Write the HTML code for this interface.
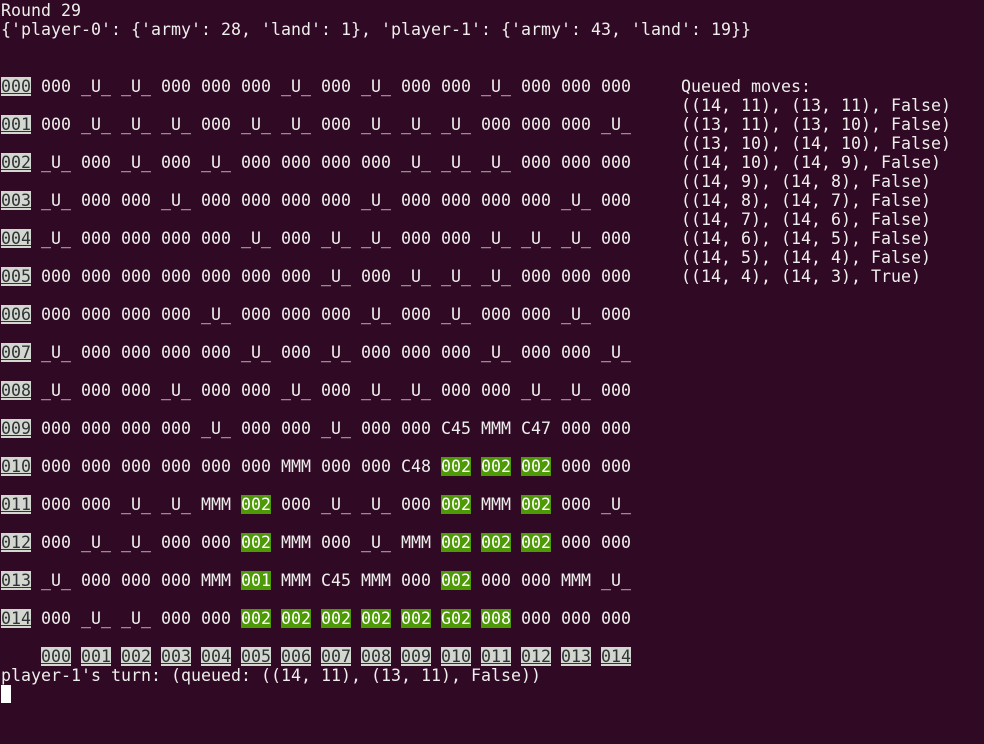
<!DOCTYPE html>
<html><head><meta charset="utf-8"><style>
html,body{margin:0;padding:0;background:#300a24;width:984px;height:744px;overflow:hidden}
pre{position:absolute;margin:0;font-family:"DejaVu Sans Mono","Liberation Mono",monospace;font-size:16.61px;line-height:19px;color:#eeeeec;white-space:pre}
.l{background:#d3d7cf;color:#2e3436;text-decoration:underline}
.g{background:#4e9a06;color:#ffffff}
.cur{position:absolute;left:1px;top:685px;width:10px;height:18px;background:#ffffff}
</style></head><body>
<pre style="left:1px;top:1px">Round 29
{'player-0': {'army': 28, 'land': 1}, 'player-1': {'army': 43, 'land': 19}}


<span class="l">000</span> 000 _U_ _U_ 000 000 000 _U_ 000 _U_ 000 000 _U_ 000 000 000

<span class="l">001</span> 000 _U_ _U_ _U_ 000 _U_ _U_ 000 _U_ _U_ _U_ 000 000 000 _U_

<span class="l">002</span> _U_ 000 _U_ 000 _U_ 000 000 000 000 _U_ _U_ _U_ 000 000 000

<span class="l">003</span> _U_ 000 000 _U_ 000 000 000 000 _U_ 000 000 000 000 _U_ 000

<span class="l">004</span> _U_ 000 000 000 000 _U_ 000 _U_ _U_ 000 000 _U_ _U_ _U_ 000

<span class="l">005</span> 000 000 000 000 000 000 000 _U_ 000 _U_ _U_ _U_ 000 000 000

<span class="l">006</span> 000 000 000 000 _U_ 000 000 000 _U_ 000 _U_ 000 000 _U_ 000

<span class="l">007</span> _U_ 000 000 000 000 _U_ 000 _U_ 000 000 000 _U_ 000 000 _U_

<span class="l">008</span> _U_ 000 000 _U_ 000 000 _U_ 000 _U_ _U_ 000 000 _U_ _U_ 000

<span class="l">009</span> 000 000 000 000 _U_ 000 000 _U_ 000 000 C45 MMM C47 000 000

<span class="l">010</span> 000 000 000 000 000 000 MMM 000 000 C48 <span class="g">002</span> <span class="g">002</span> <span class="g">002</span> 000 000

<span class="l">011</span> 000 000 _U_ _U_ MMM <span class="g">002</span> 000 _U_ _U_ 000 <span class="g">002</span> MMM <span class="g">002</span> 000 _U_

<span class="l">012</span> 000 _U_ _U_ 000 000 <span class="g">002</span> MMM 000 _U_ MMM <span class="g">002</span> <span class="g">002</span> <span class="g">002</span> 000 000

<span class="l">013</span> _U_ 000 000 000 MMM <span class="g">001</span> MMM C45 MMM 000 <span class="g">002</span> 000 000 MMM _U_

<span class="l">014</span> 000 _U_ _U_ 000 000 <span class="g">002</span> <span class="g">002</span> <span class="g">002</span> <span class="g">002</span> <span class="g">002</span> <span class="g">G02</span> <span class="g">008</span> 000 000 000

    <span class="l">000</span> <span class="l">001</span> <span class="l">002</span> <span class="l">003</span> <span class="l">004</span> <span class="l">005</span> <span class="l">006</span> <span class="l">007</span> <span class="l">008</span> <span class="l">009</span> <span class="l">010</span> <span class="l">011</span> <span class="l">012</span> <span class="l">013</span> <span class="l">014</span>
player-1's turn: (queued: ((14, 11), (13, 11), False))</pre>
<pre style="left:681px;top:77px">Queued moves:
((14, 11), (13, 11), False)
((13, 11), (13, 10), False)
((13, 10), (14, 10), False)
((14, 10), (14, 9), False)
((14, 9), (14, 8), False)
((14, 8), (14, 7), False)
((14, 7), (14, 6), False)
((14, 6), (14, 5), False)
((14, 5), (14, 4), False)
((14, 4), (14, 3), True)</pre>
<div class="cur"></div>
</body></html>
